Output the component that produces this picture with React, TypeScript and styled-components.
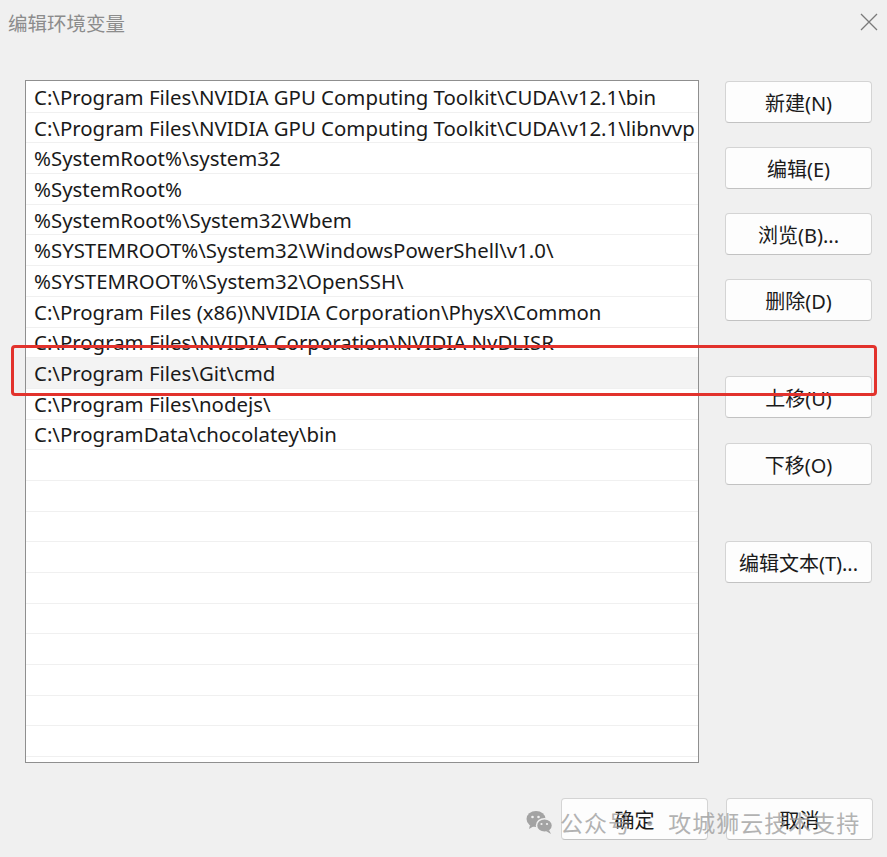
import styled, { createGlobalStyle } from 'styled-components'

const GlobalStyle = createGlobalStyle`
  html, body {
    margin: 0;
    padding: 0;
    background: #f0f0f0;
  }
  body {
    font-family: "Noto Sans", "Noto Sans CJK SC", sans-serif;
  }
`

const paths = [
  'C:\\Program Files\\NVIDIA GPU Computing Toolkit\\CUDA\\v12.1\\bin',
  'C:\\Program Files\\NVIDIA GPU Computing Toolkit\\CUDA\\v12.1\\libnvvp',
  '%SystemRoot%\\system32',
  '%SystemRoot%',
  '%SystemRoot%\\System32\\Wbem',
  '%SYSTEMROOT%\\System32\\WindowsPowerShell\\v1.0\\',
  '%SYSTEMROOT%\\System32\\OpenSSH\\',
  'C:\\Program Files (x86)\\NVIDIA Corporation\\PhysX\\Common',
  'C:\\Program Files\\NVIDIA Corporation\\NVIDIA NvDLISR',
  'C:\\Program Files\\Git\\cmd',
  'C:\\Program Files\\nodejs\\',
  'C:\\ProgramData\\chocolatey\\bin',
]

const TOTAL_ROWS = 22
const SELECTED = 9

const Window = styled.div`
  position: relative;
  width: 887px;
  height: 857px;
  background: #f0f0f0;
  overflow: hidden;
`

const TitleBar = styled.div`
  display: flex;
  align-items: center;
  justify-content: space-between;
  height: 44px;
  padding: 0 7px 0 8px;
`

const Title = styled.span`
  font-family: "Noto Sans CJK SC", sans-serif;
  font-size: 19.5px;
  color: #8c8c8c;
`

const CloseButton = styled.div`
  width: 22px;
  height: 22px;
  display: flex;
  align-items: center;
  justify-content: center;
`

const Body = styled.div`
  display: flex;
  align-items: flex-start;
  padding: 36px 0 0 25px;
`

const ListBox = styled.div`
  width: 672px;
  height: 680px;
  border: 1px solid #8f8f8f;
  background: #fff;
  padding-top: 1px;
  box-sizing: content-box;
  overflow: hidden;
`

const Row = styled.div<{ $selected?: boolean }>`
  height: 30.7px;
  box-sizing: border-box;
  display: flex;
  align-items: center;
  padding-left: 8px;
  border-bottom: 1px solid #f0f0f0;
  background: ${p => (p.$selected ? '#f3f3f3' : '#fff')};
  font-size: 20.4px;
  color: #1a1a1a;
  white-space: nowrap;
`

const Side = styled.div`
  display: flex;
  flex-direction: column;
  margin-left: 26px;
  padding-top: 1px;
`

const Button = styled.button<{ $gap?: number }>`
  width: 147px;
  height: 42px;
  margin-top: ${p => p.$gap ?? 0}px;
  background: #fdfdfd;
  border: 1px solid #d4d4d4;
  border-bottom-color: #c2c2c2;
  border-radius: 4px;
  font-family: "Noto Sans", "Noto Sans CJK SC", sans-serif;
  font-size: 20px;
  color: #1a1a1a;
  padding: 0;
`

const Footer = styled.div`
  display: flex;
  justify-content: flex-end;
  gap: 18px;
  padding: 35px 14px 0 0;
`

const Annotation = styled.div`
  position: absolute;
  left: 11px;
  top: 345px;
  width: 860px;
  height: 45px;
  border: 3.5px solid #e2322c;
  border-radius: 4px;
  pointer-events: none;
`

const Watermark = styled.div`
  position: absolute;
  left: 526px;
  top: 805px;
  display: flex;
  align-items: center;
  gap: 6px;
  opacity: 0.75;
  pointer-events: none;
`

const WatermarkText = styled.span`
  font-family: "Noto Sans CJK SC", sans-serif;
  font-size: 23px;
  color: #9a9a9a;
  letter-spacing: 1px;
`

function WeChatIcon() {
  return (
    <svg width="28" height="26" viewBox="0 0 28 26">
      <ellipse cx="10" cy="10" rx="9.5" ry="8" fill="#8a8a8a" />
      <path d="M4 16 L3 20 L8 17 Z" fill="#8a8a8a" />
      <ellipse cx="18.5" cy="16.5" rx="8" ry="6.8" fill="#8a8a8a" stroke="#f0f0f0" strokeWidth="1.5" />
      <path d="M23 21 L25 25 L20 22 Z" fill="#8a8a8a" />
      <circle cx="6.5" cy="8" r="1.3" fill="#f0f0f0" />
      <circle cx="12.5" cy="8" r="1.3" fill="#f0f0f0" />
      <circle cx="15.5" cy="15" r="1.1" fill="#f0f0f0" />
      <circle cx="21" cy="15" r="1.1" fill="#f0f0f0" />
    </svg>
  )
}

export default function App() {
  const rows = Array.from({ length: TOTAL_ROWS }, (_, i) => paths[i] ?? '')

  return (
    <Window>
      <GlobalStyle />
      <TitleBar>
        <Title>编辑环境变量</Title>
        <CloseButton>
          <svg width="18" height="18" viewBox="0 0 18 18">
            <path d="M1 1 L17 17 M17 1 L1 17" stroke="#7a7a7a" strokeWidth="1.3" />
          </svg>
        </CloseButton>
      </TitleBar>

      <Body>
        <ListBox>
          {rows.map((text, i) => (
            <Row key={i} $selected={i === SELECTED}>
              {text}
            </Row>
          ))}
        </ListBox>

        <Side>
          <Button>新建(N)</Button>
          <Button $gap={24}>编辑(E)</Button>
          <Button $gap={24}>浏览(B)...</Button>
          <Button $gap={24}>删除(D)</Button>
          <Button $gap={55}>上移(U)</Button>
          <Button $gap={25}>下移(O)</Button>
          <Button $gap={56}>编辑文本(T)...</Button>
        </Side>
      </Body>

      <Footer>
        <Button>确定</Button>
        <Button>取消</Button>
      </Footer>

      <Annotation />

      <Watermark>
        <WeChatIcon />
        <WatermarkText>公众号 · 攻城狮云技术支持</WatermarkText>
      </Watermark>
    </Window>
  )
}
